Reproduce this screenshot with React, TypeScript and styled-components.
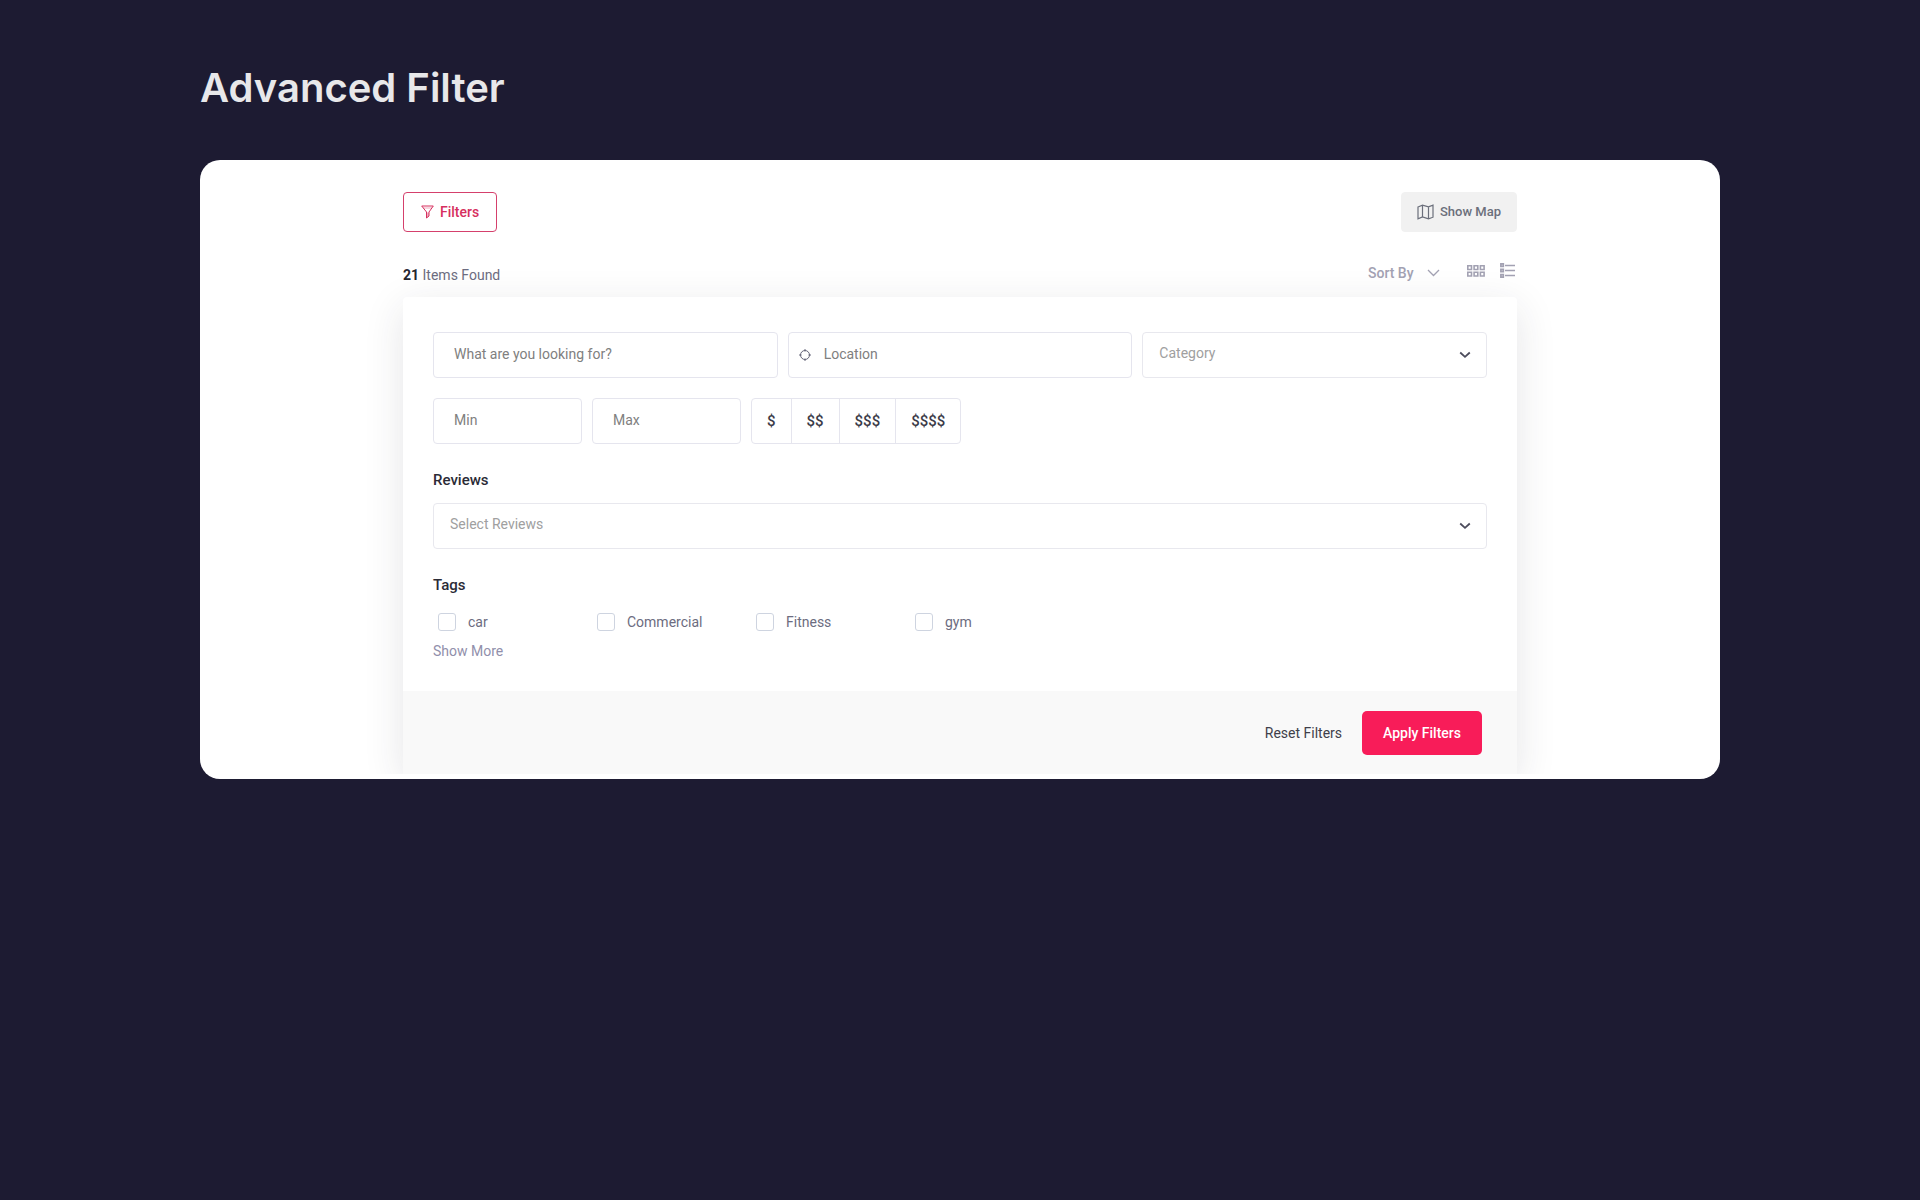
import React from "react";
import styled, { createGlobalStyle } from "styled-components";

const GlobalStyle = createGlobalStyle`
  *, *::before, *::after { box-sizing: border-box; }
  body {
    margin: 0;
    background: #1d1b32;
    font-family: Roboto, "Liberation Sans", sans-serif;
    font-size: 14px;
    line-height: 20px;
    color: #6c6c80;
  }
  button, input, select { font: inherit; color: inherit; margin: 0; }
  button { cursor: pointer; }
`;

const Page = styled.main`
  max-width: 1560px;
  margin: 0 auto;
  padding: 60px 20px;
`;

const Title = styled.h1`
  margin: 0 0 44px;
  font-family: Inter, "Liberation Sans", sans-serif;
  font-size: 40px;
  line-height: 56px;
  font-weight: 600;
  color: #e8e8ea;
`;

const Card = styled.section`
  padding-bottom: 5px;
  border-radius: 20px;
  background: #fff;
  overflow: hidden;
`;

const Viewport = styled.div`
  padding: 32px 20px 0;
  overflow: hidden;
`;

const Content = styled.div`
  max-width: 1114px;
  margin: 0 auto;
`;

const Bar = styled.div`
  display: flex;
  justify-content: space-between;
  align-items: center;
`;

const ResultBar = styled(Bar)`
  height: 65px;
  padding-top: 20px;
`;

const ToolButton = styled.button<{ $outlined?: boolean }>`
  display: flex;
  align-items: center;
  justify-content: center;
  gap: 6px;
  height: 40px;
  padding: 0 ${(p) => (p.$outlined ? 17 : 15)}px;
  border: 1px solid ${(p) => (p.$outlined ? "#d5406c" : "#f1f1f1")};
  border-radius: 4px;
  background: ${(p) => (p.$outlined ? "#fff" : "#f1f1f1")};
  color: ${(p) => (p.$outlined ? "#d6305f" : "#6b6f7b")};
  font-size: ${(p) => (p.$outlined ? 14 : 13)}px;
  font-weight: 500;
`;

const Count = styled.p`
  margin: 0;
  strong {
    color: #25252f;
    font-weight: 700;
  }
`;

const ViewTools = styled.div`
  display: flex;
  align-items: flex-start;
  padding-bottom: 4px;
  color: #a2a1b2;
`;

const SortWrap = styled.label`
  position: relative;
  display: block;
  margin-right: 25px;
`;

const SortSelect = styled.select`
  appearance: none;
  display: block;
  width: 72px;
  height: 20px;
  padding: 0;
  border: 0;
  background: transparent;
  font-weight: 500;
`;

const SortArrow = styled.svg`
  position: absolute;
  right: 0;
  top: 6px;
  pointer-events: none;
`;

const IconButton = styled.button`
  display: flex;
  align-items: center;
  height: 16px;
  padding: 0 2px;
  margin-left: 11px;
  border: 0;
  background: none;
  &:first-of-type { margin-left: 0; }
`;

const Panel = styled.form`
  border-radius: 4px 4px 0 0;
  background: #fff;
  box-shadow: 0 10px 40px rgba(40, 40, 60, 0.12);
`;

const Fields = styled.div`
  padding: 35px 30px 30px;
`;

const SearchRow = styled.div`
  display: grid;
  grid-template-columns: repeat(3, 1fr);
  gap: 10px;
`;

const PriceRow = styled.div`
  display: flex;
  gap: 10px;
  margin-top: 20px;
`;

const Field = styled.label<{ $small?: boolean }>`
  position: relative;
  display: block;
  width: ${(p) => (p.$small ? "149px" : "100%")};
`;

const TextInput = styled.input<{ $icon?: boolean }>`
  width: 100%;
  height: 46px;
  padding: 0 20px 2px ${(p) => (p.$icon ? 35 : 20)}px;
  border: 1px solid #e5e5ee;
  border-radius: 4px;
  background: #fff;
  &::placeholder { color: #808080; opacity: 1; }
`;

const TargetIcon = styled.svg`
  position: absolute;
  left: 11px;
  top: 17px;
`;

const SelectBox = styled.select`
  appearance: none;
  width: 100%;
  height: 46px;
  padding: 0 40px 4px 16px;
  border: 1px solid #e8e8ee;
  border-radius: 4px;
  background: #fff;
  color: #a0a0a0;
`;

const SelectArrow = styled.svg`
  position: absolute;
  right: 16px;
  top: 19px;
  pointer-events: none;
`;

const PriceGroup = styled.div`
  display: flex;
  border: 1px solid #e5e5ee;
  border-radius: 4px;
`;

const PriceButton = styled.button`
  height: 44px;
  padding: 0 15px;
  border: 0;
  background: none;
  color: #3b3b48;
  font-size: 15px;
  font-weight: 500;
  & + & { border-left: 1px solid #e5e5ee; }
`;

const Heading = styled.h2`
  margin: 26px 0 13px;
  font-size: 15px;
  line-height: 20px;
  font-weight: 500;
  color: #2b2b36;
`;

const Tags = styled.div`
  display: grid;
  grid-template-columns: repeat(auto-fill, 149px);
  gap: 10px;
  padding: 4px 0 0 5px;
`;

const Tag = styled.label`
  display: flex;
  align-items: center;
  gap: 12px;
`;

const TagBox = styled.input`
  appearance: none;
  width: 18px;
  height: 18px;
  border: 1px solid #ced4e0;
  border-radius: 3px;
  background: #fff;
  &:checked { background: #f81c59; }
`;

const MoreLink = styled.a`
  display: inline-block;
  margin-top: 9px;
  color: #918fab;
  text-decoration: none;
`;

const Footer = styled.div`
  display: flex;
  justify-content: flex-end;
  align-items: center;
  gap: 20px;
  padding: 20px 35px 19px;
  background: #f9f9f9;
`;

const ResetButton = styled.button`
  padding: 0;
  border: 0;
  background: none;
  color: #3f3f4a;
`;

const ApplyButton = styled.button`
  height: 44px;
  padding: 0 21px;
  border: 0;
  border-radius: 5px;
  background: #f81c59;
  color: #fff;
  font-weight: 500;
`;

const prices = ["$", "$$", "$$$", "$$$$"];
const tags = ["car", "Commercial", "Fitness", "gym"];

const Arrow = () => (
  <SelectArrow width="12" height="8" viewBox="0 0 12 8" fill="none" stroke="#4c4c5c" strokeWidth="1.8">
    <path d="M1.200 1.500 6 5.800l4.800-4.300" />
  </SelectArrow>
);

export default function App() {
  return (
    <Page>
      <GlobalStyle />
      <Title>Advanced Filter</Title>
      <Card>
        <Viewport>
          <Content>
            <Bar>
              <ToolButton type="button" $outlined>
                <svg width="13" height="14" viewBox="0 0 13 14" fill="none" stroke="currentColor">
                  <path d="M.7 1h11.600L8 7v4L5.500 13V7z" />
                  <path d="M2 3h9" strokeOpacity=".4" />
                  <path d="M5.500 7.500H8V11l-2.500 2z" fill="currentColor" fillOpacity=".4" stroke="none" />
                </svg>
                Filters
              </ToolButton>
              <ToolButton type="button">
                <svg width="17" height="16" viewBox="0 0 17 16" fill="none" stroke="currentColor" strokeWidth="1.2">
                  <path d="M1 3l4.500-1.800 6 1.600L16 1.200v12l-4.500 1.600-6-1.800L1 14.800zM5.500 1.200V13M11.500 2.800v12" />
                </svg>
                Show Map
              </ToolButton>
            </Bar>
            <ResultBar>
              <Count><strong>21</strong> Items Found</Count>
              <ViewTools>
                <SortWrap>
                  <SortSelect aria-label="Sort By"><option>Sort By</option></SortSelect>
                  <SortArrow width="13" height="8" viewBox="0 0 13 8" fill="none" stroke="currentColor" strokeWidth="1.300">
                    <path d="M1 1l5.500 5.500L12 1" />
                  </SortArrow>
                </SortWrap>
                <IconButton type="button" aria-label="Grid view">
                  <svg width="18" height="12" viewBox="0 0 18 12" fill="none" stroke="currentColor" strokeWidth="1.600">
                    <path d="M.8.8h3.700v3.700H.8zM7.100.8h3.700v3.700H7.100zM13.400.8h3.700v3.700h-3.700zM.8 7.300h3.700V11H.8zM7.100 7.300h3.700V11H7.100zM13.400 7.300h3.700V11h-3.700z" />
                  </svg>
                </IconButton>
                <IconButton type="button" aria-label="List view">
                  <svg width="15" height="15" viewBox="0 0 15 15" fill="none" stroke="currentColor" strokeWidth="1.700">
                    <path d="M.9.9h2.400v2.400H.9zM.9 6.300h2.400v2.400H.9zM.9 11.700h2.400v2.400H.9zM5 2.500h10M5 7.500h10M5 12.500h10" />
                  </svg>
                </IconButton>
              </ViewTools>
            </ResultBar>
            <Panel onSubmit={(e) => e.preventDefault()}>
              <Fields>
                <SearchRow>
                  <Field>
                    <TextInput aria-label="Search" placeholder="What are you looking for?" />
                  </Field>
                  <Field>
                    <TextInput aria-label="Location" placeholder="Location" $icon />
                    <TargetIcon width="12" height="12" viewBox="0 0 12 12" fill="none" stroke="#66667a">
                      <circle cx="6" cy="6" r="4.500" />
                      <path d="M6 0v2.500M6 9.500v2.500M0 6h2.500M9.500 6H12" />
                    </TargetIcon>
                  </Field>
                  <Field>
                    <SelectBox aria-label="Category"><option>Category</option></SelectBox>
                    <Arrow />
                  </Field>
                </SearchRow>
                <PriceRow>
                  <Field $small><TextInput aria-label="Minimum price" placeholder="Min" /></Field>
                  <Field $small><TextInput aria-label="Maximum price" placeholder="Max" /></Field>
                  <PriceGroup>
                    {prices.map((p) => <PriceButton type="button" key={p}>{p}</PriceButton>)}
                  </PriceGroup>
                </PriceRow>
                <Heading>Reviews</Heading>
                <Field>
                  <SelectBox aria-label="Reviews"><option>Select Reviews</option></SelectBox>
                  <Arrow />
                </Field>
                <Heading>Tags</Heading>
                <Tags>
                  {tags.map((t) => (
                    <Tag key={t}><TagBox type="checkbox" />{t}</Tag>
                  ))}
                </Tags>
                <MoreLink href="#more">Show More</MoreLink>
              </Fields>
              <Footer>
                <ResetButton type="reset">Reset Filters</ResetButton>
                <ApplyButton type="submit">Apply Filters</ApplyButton>
              </Footer>
            </Panel>
          </Content>
        </Viewport>
      </Card>
    </Page>
  );
}
